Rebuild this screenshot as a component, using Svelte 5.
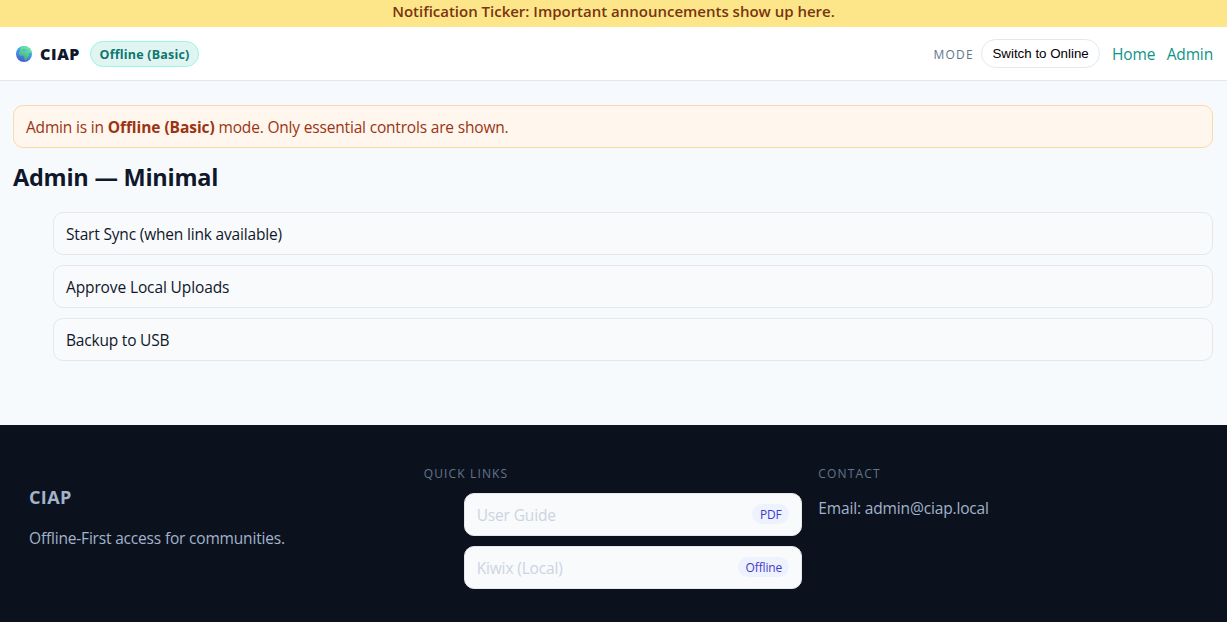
<script>
  const actions = ['Start Sync (when link available)', 'Approve Local Uploads', 'Backup to USB'];
  const spacing = ['-0.18px', '-0.12px', '-0.2px'];
  const links = [
    { label: 'User Guide', tag: 'PDF', width: 37 },
    { label: 'Kiwix (Local)', tag: 'Offline', width: 51 }
  ];
</script>

<div class="page">
  <div class="ticker"><span>Notification Ticker: Important announcements show up here.</span></div>

  <header>
    <div class="bar">
      <div class="brand">
        <svg class="globe" viewBox="0 0 16 16" aria-hidden="true">
          <defs>
            <linearGradient id="sea" x1="0.7" y1="0" x2="0.3" y2="1">
              <stop offset="0" stop-color="#35b9f3" />
              <stop offset="0.55" stop-color="#3f8fe6" />
              <stop offset="1" stop-color="#4a55c8" />
            </linearGradient>
            <linearGradient id="land" x1="0.7" y1="0" x2="0.3" y2="1">
              <stop offset="0" stop-color="#72f0a0" />
              <stop offset="1" stop-color="#3fa488" />
            </linearGradient>
            <clipPath id="disc"><circle cx="8" cy="8" r="8" /></clipPath>
          </defs>
          <g clip-path="url(#disc)">
            <rect width="16" height="16" fill="url(#sea)" />
            <path fill="url(#land)" d="M3.500 3 5.500 .8 9 0l3 .8 2.8 2.700L16 7l-.8 1.600-1-1.800-1.200.2-.3 1.600 1 .3-2.100 2.600-.7 2-1.600 1-1-1.500-.2-2.200-1-1.200-2.700.1-1.800-1.400.3-2L4.300 5z" />
            <path fill="#45aeea" d="m6.300 4 1.900-.9.9.9 2.400.2-.3.9-2.500-.3-1.600.2z" />
          </g>
        </svg>
        <strong class="name">CIAP</strong>
        <span class="status"><span>Offline (Basic)</span></span>
      </div>
      <nav>
        <span class="mode">MODE</span>
        <button type="button">Switch to Online</button>
        <a class="home" href="#home">Home</a>
        <a class="admin" href="#admin">Admin</a>
      </nav>
    </div>
  </header>

  <main>
    <p class="alert">Admin is in <strong>Offline (Basic)</strong> mode. Only essential controls are shown.</p>
    <h2>Admin — Minimal</h2>
    <ul>
      {#each actions as action, i}
        <li><span style:letter-spacing={spacing[i]}>{action}</span></li>
      {/each}
    </ul>
  </main>

  <footer>
    <div class="columns">
      <section>
        <h3>CIAP</h3>
        <p class="tagline">Offline-First access for communities.</p>
      </section>
      <section>
        <h4>QUICK LINKS</h4>
        <ul>
          {#each links as link}
            <li><span>{link.label}</span><span class="tag" style:width="{link.width}px">{link.tag}</span></li>
          {/each}
        </ul>
      </section>
      <section>
        <h4>CONTACT</h4>
        <p class="email">Email: admin@ciap.local</p>
      </section>
    </div>
  </footer>
</div>

<style>
  :global(body) { margin: 0; background: #f7fafd; }
  .page {
    height: 622px;
    display: flex;
    flex-direction: column;
    overflow: hidden;
    font: 15.5px/21px "Open Sans", "Noto Sans", sans-serif;
    letter-spacing: -0.15px;
    color: #0f172a;
    white-space: nowrap;
  }
  .page * { box-sizing: border-box; }
  .ticker {
    height: 27px;
    flex: none;
    background: #fde68a;
    color: #78350f;
    text-align: center;
    font-weight: 600;
    font-size: 15px;
    line-height: 23px;
    letter-spacing: -0.01px;
  }
  header { height: 54px; flex: none; background: #fff; border-bottom: 1px solid #e2e8f0; }
  .bar { width: 1200px; height: 53px; margin-left: 13px; display: flex; justify-content: space-between; align-items: center; }
  .brand { display: flex; align-items: center; padding-left: 3px; }
  .globe { width: 16px; height: 16px; margin-right: 8px; }
  .name { width: 50px; padding-top: 1px; font-size: 16px; font-weight: 800; letter-spacing: 0.6px; }
  .status {
    width: 109px;
    height: 26px;
    border: 1px solid #99f6e4;
    border-radius: 13px;
    background: #e0f5f2;
    color: #0f766e;
    font-size: 12.5px;
    line-height: 25px;
    font-weight: 700;
    letter-spacing: 0.2px;
    text-align: center;
  }
  nav { display: flex; align-items: center; padding-top: 2px; }
  .mode { color: #64748b; font-size: 12px; letter-spacing: 1.3px; margin-right: 7px; }
  button {
    width: 119px;
    height: 29px;
    padding: 0;
    margin: 0 12px 2px 0;
    border: 1px solid #e2e8f0;
    border-radius: 15px;
    background: #fff;
    color: #000;
    font: 13.333px "Liberation Sans", Arial, sans-serif;
  }
  a { color: #0d9488; text-decoration: none; }
  .home { margin-right: 11.4px; }
  main { width: 1200px; height: 344px; flex: none; margin-left: 13px; padding-top: 24px; }
  .alert {
    height: 43px;
    margin: 0;
    padding: 0 12px;
    border: 1px solid #fed7aa;
    border-radius: 10px;
    background: #fff6ed;
    color: #9a3412;
    line-height: 43px;
    letter-spacing: -0.18px;
  }
  .alert strong { letter-spacing: -0.06px; }
  h2 { margin: 13px 0 18px; font-size: 23.500px; line-height: 33px; font-weight: 700; letter-spacing: -0.25px; }
  ul { list-style: none; margin: 0; padding: 0 0 0 40px; display: flex; flex-direction: column; gap: 10px; }
  li {
    height: 43px;
    padding: 2px 12px 0;
    display: flex;
    align-items: center;
    justify-content: space-between;
    border: 1px solid #e5e7eb;
    border-radius: 10px;
    background: #f9fafc;
  }
  footer { flex: 1; background: #0b121e; color: #a3b3cb; }
  .columns { width: 1168px; margin-left: 29px; padding-top: 40px; display: grid; grid-template-columns: repeat(3, 1fr); gap: 16px; }
  h3 { margin: 20px 0 19px; font-size: 18px; line-height: 24px; font-weight: 700; letter-spacing: 0.4px; }
  h4 { margin: 0 0 10px; font-size: 12px; line-height: 18px; font-weight: 400; letter-spacing: 1.150px; color: #64748b; }
  footer p { margin: 0; }
  .tagline { letter-spacing: -0.18px; }
  .email { padding-top: 5px; }
  footer li { color: #cbd5e1; }
  .tag {
    height: 20px;
    border-radius: 10px;
    background: #eef2ff;
    color: #4338ca;
    font-size: 12px;
    line-height: 21px;
    text-align: center;
    margin-bottom: 3px;
  }
</style>
